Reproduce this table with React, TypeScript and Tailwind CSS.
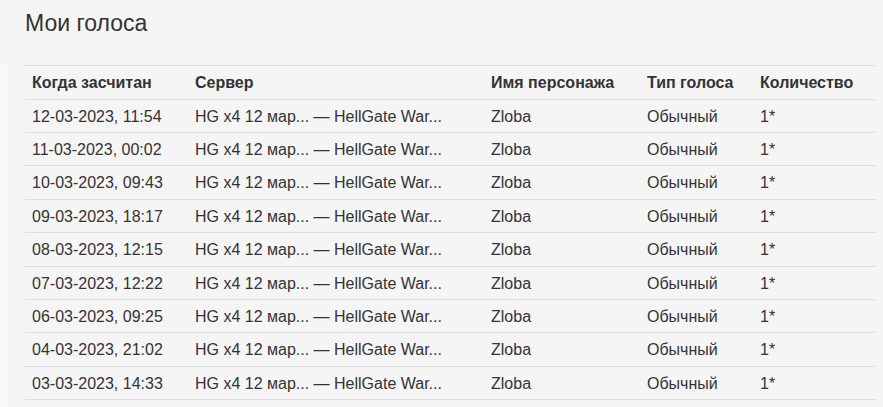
import React from "react";

interface Vote {
  date: string;
  server: string;
  name: string;
  type: string;
  amount: string;
}

const dates = [
  "12-03-2023, 11:54",
  "11-03-2023, 00:02",
  "10-03-2023, 09:43",
  "09-03-2023, 18:17",
  "08-03-2023, 12:15",
  "07-03-2023, 12:22",
  "06-03-2023, 09:25",
  "04-03-2023, 21:02",
  "03-03-2023, 14:33",
];

const votes: Vote[] = dates.map((date) => ({
  date,
  server: "HG x4 12 мар... — HellGate War...",
  name: "Zloba",
  type: "Обычный",
  amount: "1*",
}));

export default function App() {
  return (
    <div
      className="min-h-[407px] w-[883px] bg-[#f5f5f5] text-[#333]"
      style={{ fontFamily: '"Liberation Sans", Arial, sans-serif' }}
    >
      <div className="h-[64px] px-[25px] pt-[10px]">
        <h1 className="text-[23px] leading-[27px] font-normal">Мои голоса</h1>
      </div>
      <div className="flex">
        <div className="w-[8px] min-h-[343px] bg-[#fafafa]" />
        <div className="pl-[17px] pr-[8px] pt-[1px]">
          <table className="w-[850px] table-fixed border-collapse text-[16px]">
            <colgroup>
              <col className="w-[163px]" />
              <col className="w-[296px]" />
              <col className="w-[156px]" />
              <col className="w-[113px]" />
              <col className="w-[122px]" />
            </colgroup>
            <thead>
              <tr className="border-t border-b border-[#ddd] text-left font-bold">
                <th className="px-[7px] pt-[8px] pb-[6px] leading-[18.6px]">Когда засчитан</th>
                <th className="px-[7px] pt-[8px] pb-[6px] leading-[18.6px]">Сервер</th>
                <th className="px-[7px] pt-[8px] pb-[6px] leading-[18.6px]">Имя персонажа</th>
                <th className="px-[7px] pt-[8px] pb-[6px] leading-[18.6px]">Тип голоса</th>
                <th className="px-[7px] pt-[8px] pb-[6px] leading-[18.6px]">Количество</th>
              </tr>
            </thead>
            <tbody>
              {votes.map((v, i) => (
                <tr key={i} className="border-b border-[#ddd]">
                  <td className="px-[7px] pt-[8px] pb-[6px] leading-[18.4px] whitespace-nowrap">{v.date}</td>
                  <td className="px-[7px] pt-[8px] pb-[6px] leading-[18.4px] whitespace-nowrap">{v.server}</td>
                  <td className="px-[7px] pt-[8px] pb-[6px] leading-[18.4px]">{v.name}</td>
                  <td className="px-[7px] pt-[8px] pb-[6px] leading-[18.4px]">{v.type}</td>
                  <td className="px-[7px] pt-[8px] pb-[6px] leading-[18.4px]">{v.amount}</td>
                </tr>
              ))}
            </tbody>
          </table>
        </div>
      </div>
    </div>
  );
}
